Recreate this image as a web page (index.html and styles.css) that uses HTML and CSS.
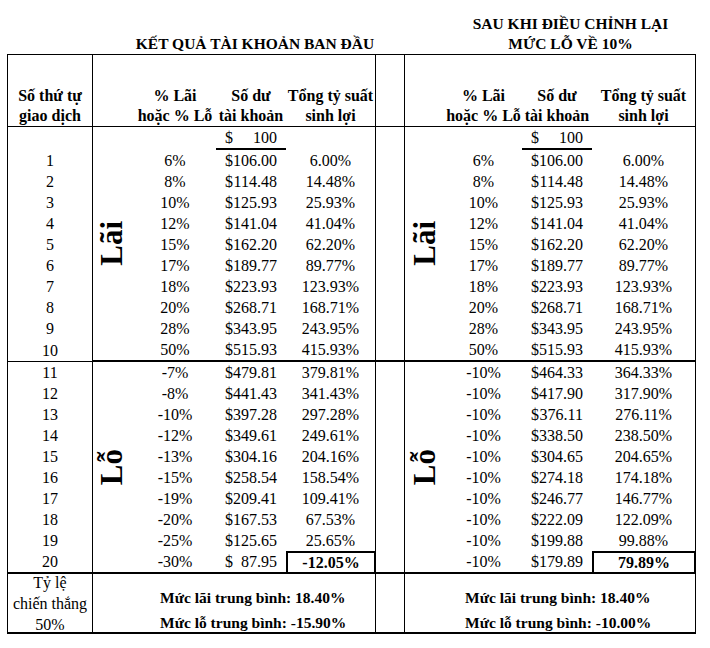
FILE: index.html
```html
<!DOCTYPE html>
<html lang="vi">
<head>
<meta charset="utf-8">
<title>Kết quả tài khoản</title>
<link rel="stylesheet" href="styles.css">
</head>
<body>
<div class="sheet">
  <!-- title row -->
  <div class="e"></div>
  <div class="e"></div>
  <div class="title span3">KẾT QUẢ TÀI KHOẢN BAN ĐẦU</div>
  <div class="e"></div>
  <div class="e"></div>
  <div class="title span3">SAU KHI ĐIỀU CHỈNH LẠI<br>MỨC LỖ VỀ 10%</div>

  <!-- header row -->
  <div class="h n">Số thứ tự<br>giao dịch</div>
  <div class="h"></div>
  <div class="h">% Lãi<br>hoặc % Lỗ</div>
  <div class="h">Số dư<br>tài khoản</div>
  <div class="h t">Tổng tỷ suất<br>sinh lợi</div>
  <div class="h"></div>
  <div class="h rl"></div>
  <div class="h">% Lãi<br>hoặc % Lỗ</div>
  <div class="h">Số dư<br>tài khoản</div>
  <div class="h rt">Tổng tỷ suất<br>sinh lợi</div>

  <!-- starting balance row -->
  <div class="c n"></div>
  <div class="lab rs11 left"><span class="vt">Lãi</span></div>
  <div class="c"></div>
  <div class="sd ul"><span>$</span><span>100</span></div>
  <div class="c t"></div>
  <div class="sp rs11"></div>
  <div class="lab rs11 rl"><span class="vt">Lãi</span></div>
  <div class="c"></div>
  <div class="sd ul"><span>$</span><span>100</span></div>
  <div class="c rt"></div>

  <div class="c n">1</div><div class="c">6%</div><div class="sd"><span>$</span><span>106.00</span></div><div class="c t">6.00%</div>
  <div class="c">6%</div><div class="sd"><span>$</span><span>106.00</span></div><div class="c rt">6.00%</div>

  <div class="c n">2</div><div class="c">8%</div><div class="sd"><span>$</span><span>114.48</span></div><div class="c t">14.48%</div>
  <div class="c">8%</div><div class="sd"><span>$</span><span>114.48</span></div><div class="c rt">14.48%</div>

  <div class="c n">3</div><div class="c">10%</div><div class="sd"><span>$</span><span>125.93</span></div><div class="c t">25.93%</div>
  <div class="c">10%</div><div class="sd"><span>$</span><span>125.93</span></div><div class="c rt">25.93%</div>

  <div class="c n">4</div><div class="c">12%</div><div class="sd"><span>$</span><span>141.04</span></div><div class="c t">41.04%</div>
  <div class="c">12%</div><div class="sd"><span>$</span><span>141.04</span></div><div class="c rt">41.04%</div>

  <div class="c n">5</div><div class="c">15%</div><div class="sd"><span>$</span><span>162.20</span></div><div class="c t">62.20%</div>
  <div class="c">15%</div><div class="sd"><span>$</span><span>162.20</span></div><div class="c rt">62.20%</div>

  <div class="c n">6</div><div class="c">17%</div><div class="sd"><span>$</span><span>189.77</span></div><div class="c t">89.77%</div>
  <div class="c">17%</div><div class="sd"><span>$</span><span>189.77</span></div><div class="c rt">89.77%</div>

  <div class="c n">7</div><div class="c">18%</div><div class="sd"><span>$</span><span>223.93</span></div><div class="c t">123.93%</div>
  <div class="c">18%</div><div class="sd"><span>$</span><span>223.93</span></div><div class="c rt">123.93%</div>

  <div class="c n">8</div><div class="c">20%</div><div class="sd"><span>$</span><span>268.71</span></div><div class="c t">168.71%</div>
  <div class="c">20%</div><div class="sd"><span>$</span><span>268.71</span></div><div class="c rt">168.71%</div>

  <div class="c n">9</div><div class="c">28%</div><div class="sd"><span>$</span><span>343.95</span></div><div class="c t">243.95%</div>
  <div class="c">28%</div><div class="sd"><span>$</span><span>343.95</span></div><div class="c rt">243.95%</div>

  <div class="c n b1">10</div><div class="c b2">50%</div><div class="sd b2"><span>$</span><span>515.93</span></div><div class="c t b2">415.93%</div>
  <div class="c b2">50%</div><div class="sd b2"><span>$</span><span>515.93</span></div><div class="c rt b2">415.93%</div>

  <!-- losses -->
  <div class="c n">11</div>
  <div class="lab rs10 left"><span class="vt">Lỗ</span></div>
  <div class="c">-7%</div><div class="sd"><span>$</span><span>479.81</span></div><div class="c t">379.81%</div>
  <div class="sp rs10"></div>
  <div class="lab rs10 rl"><span class="vt">Lỗ</span></div>
  <div class="c">-10%</div><div class="sd"><span>$</span><span>464.33</span></div><div class="c rt">364.33%</div>

  <div class="c n">12</div><div class="c">-8%</div><div class="sd"><span>$</span><span>441.43</span></div><div class="c t">341.43%</div>
  <div class="c">-10%</div><div class="sd"><span>$</span><span>417.90</span></div><div class="c rt">317.90%</div>

  <div class="c n">13</div><div class="c">-10%</div><div class="sd"><span>$</span><span>397.28</span></div><div class="c t">297.28%</div>
  <div class="c">-10%</div><div class="sd"><span>$</span><span>376.11</span></div><div class="c rt">276.11%</div>

  <div class="c n">14</div><div class="c">-12%</div><div class="sd"><span>$</span><span>349.61</span></div><div class="c t">249.61%</div>
  <div class="c">-10%</div><div class="sd"><span>$</span><span>338.50</span></div><div class="c rt">238.50%</div>

  <div class="c n">15</div><div class="c">-13%</div><div class="sd"><span>$</span><span>304.16</span></div><div class="c t">204.16%</div>
  <div class="c">-10%</div><div class="sd"><span>$</span><span>304.65</span></div><div class="c rt">204.65%</div>

  <div class="c n">16</div><div class="c">-15%</div><div class="sd"><span>$</span><span>258.54</span></div><div class="c t">158.54%</div>
  <div class="c">-10%</div><div class="sd"><span>$</span><span>274.18</span></div><div class="c rt">174.18%</div>

  <div class="c n">17</div><div class="c">-19%</div><div class="sd"><span>$</span><span>209.41</span></div><div class="c t">109.41%</div>
  <div class="c">-10%</div><div class="sd"><span>$</span><span>246.77</span></div><div class="c rt">146.77%</div>

  <div class="c n">18</div><div class="c">-20%</div><div class="sd"><span>$</span><span>167.53</span></div><div class="c t">67.53%</div>
  <div class="c">-10%</div><div class="sd"><span>$</span><span>222.09</span></div><div class="c rt">122.09%</div>

  <div class="c n">19</div><div class="c">-25%</div><div class="sd"><span>$</span><span>125.65</span></div><div class="c t">25.65%</div>
  <div class="c">-10%</div><div class="sd"><span>$</span><span>199.88</span></div><div class="c rt">99.88%</div>

  <div class="c n b2">20</div><div class="c b2">-30%</div><div class="sd b2"><span>$</span><span>87.95</span></div><div class="c box">-12.05%</div>
  <div class="c b2">-10%</div><div class="sd b2"><span>$</span><span>179.89</span></div><div class="c box">79.89%</div>

  <!-- footer -->
  <div class="foot-n n">Tỷ lệ<br>chiến thắng<br>50%</div>
  <div class="sum span4 t left-sum"><div>Mức lãi trung bình: 18.40%</div><div>Mức lỗ trung bình: -15.90%</div></div>
  <div class="sp foot-sp"></div>
  <div class="sum span4 rl rt right-sum"><div>Mức lãi trung bình: 18.40%</div><div>Mức lỗ trung bình: -10.00%</div></div>
</div>
</body>
</html>
```

FILE: styles.css
```css
html, body {
  margin: 0;
  padding: 0;
  background: #fff;
}

body {
  font-family: "Liberation Serif", "Times New Roman", serif;
  font-size: 16px;
  color: #000;
}

.sheet {
  display: grid;
  margin-left: 7px;
  width: 689px;
  grid-template-columns: 86px 41px 82px 70px 90px 28px 41px 77px 70px 104px;
  grid-template-rows: 54px 73px 23px repeat(9, 21px) 23px repeat(9, 21px) 23px 60px;
}

.sheet > div {
  box-sizing: border-box;
  min-width: 0;
}

.span3 { grid-column: span 3; }
.span4 { grid-column: span 4; }
.rs11 { grid-row: span 11; }
.rs10 { grid-row: span 10; }

/* vertical rules */
.n { border-left: 1px solid #000; border-right: 1px solid #000; }
.t { border-right: 1px solid #000; }
.rl { border-left: 1px solid #000; }
.rt { border-right: 1px solid #000; }

/* titles */
.title {
  display: flex;
  flex-direction: column;
  justify-content: flex-end;
  align-items: center;
  text-align: center;
  font-weight: bold;
  font-size: 15.5px;
  line-height: 20px;
  white-space: nowrap;
}

/* header */
.h {
  display: flex;
  flex-direction: column;
  justify-content: flex-end;
  align-items: center;
  text-align: center;
  font-weight: bold;
  line-height: 20px;
  white-space: nowrap;
  border-top: 1px solid #000;
  border-bottom: 1px solid #000;
}

/* data cells */
.c {
  display: flex;
  align-items: center;
  justify-content: center;
  line-height: 21px;
  white-space: nowrap;
}

.sd {
  display: flex;
  align-items: center;
  justify-content: space-between;
  padding: 0 9px;
  line-height: 21px;
  white-space: nowrap;
}

.ul { border-bottom: 2px solid #000; }
.b1 { border-bottom: 1px solid #000; }
.b2 { border-bottom: 2px solid #000; }

.box {
  border: 2px solid #000;
  font-weight: bold;
}

/* rotated labels */
.lab {
  display: flex;
  align-items: center;
  justify-content: center;
  border-bottom: 2px solid #000;
}
.lab.left { padding-right: 4px; }
.lab.rl { padding-right: 2px; }

.vt {
  writing-mode: vertical-rl;
  transform: rotate(180deg);
  font-weight: bold;
  font-size: 31px;
  line-height: 1;
  white-space: nowrap;
}

.sp { border-bottom: 2px solid #000; }

/* footer */
.foot-n {
  display: flex;
  flex-direction: column;
  justify-content: center;
  align-items: center;
  text-align: center;
  line-height: 21px;
  white-space: nowrap;
  border-bottom: 2px solid #000;
}

.sum {
  padding-top: 11px;
  font-weight: bold;
  font-size: 15.5px;
  line-height: 25px;
  white-space: nowrap;
  border-bottom: 2px solid #000;
}
.left-sum { padding-left: 67px; }
.right-sum { padding-left: 60px; }

.foot-sp { border-bottom: 2px solid #000; }
```
